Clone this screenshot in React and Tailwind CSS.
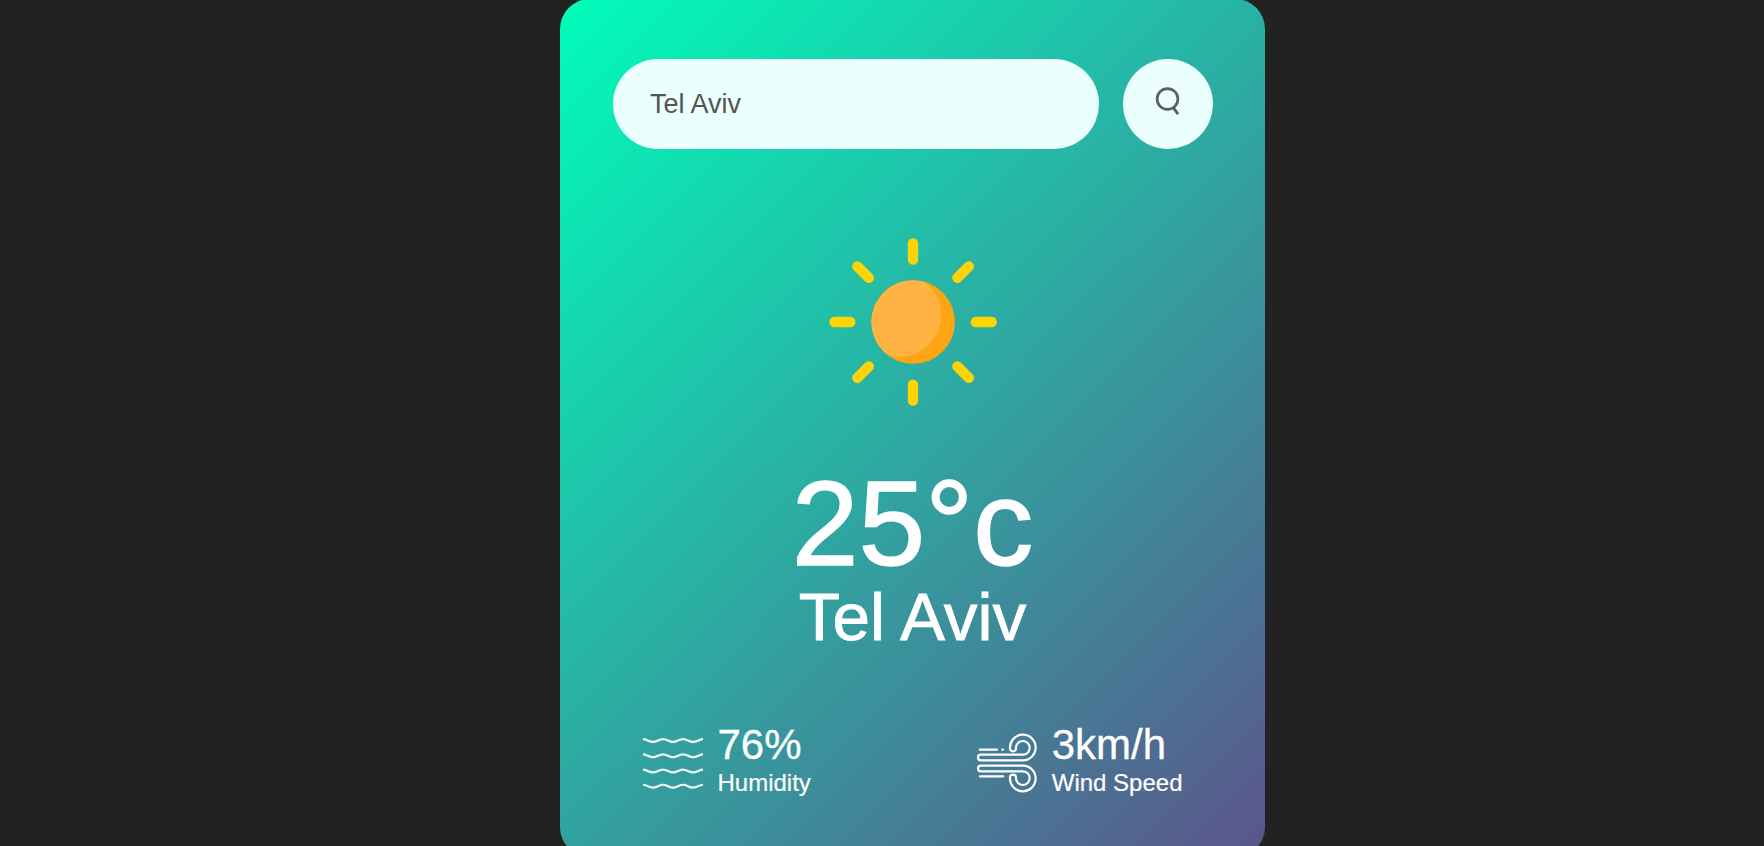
import React from "react";

function SearchIcon() {
  return (
    <svg className="h-[30px] w-[30px]" viewBox="0 0 30 30" fill="none" stroke="#5f5f5f">
      <circle cx="14.5" cy="14" r="10.4" strokeWidth="2.7" />
      <path d="M20.2 22.3 L25 29.2" strokeWidth="2.9" />
    </svg>
  );
}

function SunIcon() {
  return (
    <svg className="mt-[45px] h-[255px] w-[255px]" viewBox="-75 -78 765 765">
      <defs>
        <clipPath id="disc">
          <circle cx="309.5" cy="306" r="125.5" />
        </clipPath>
      </defs>
      <circle cx="309.5" cy="306" r="125.5" fill="#ffa412" />
      <circle cx="268" cy="285" r="126" fill="#ffb342" clipPath="url(#disc)" />
      <path
        d="M309 70V119M309 494V542M73.500 306H121M497.500 306H545.500M142 139L176.500 173.500M476.500 139L442 173.500M142 473.500L176.500 439M476.500 473.500L442 439"
        stroke="#ffd405"
        strokeWidth="31"
        strokeLinecap="round"
      />
    </svg>
  );
}

const wave = "c3.500 0 6 2.800 10 2.800s6-2.800 10-2.800s6 2.800 10 2.800s6-2.800 10-2.800s6 2.800 10 2.800s6.500-2.800 10-2.800";

function HumidityIcon() {
  return (
    <svg className="mt-[9px] h-[60px] w-[60px]" viewBox="0 0 60 60" fill="none" stroke="#fff" strokeWidth="2.1" strokeOpacity="0.95">
      {[6.1, 21.4, 36.6, 51.8].map((y) => (
        <path key={y} d={`M0 ${y}${wave}`} />
      ))}
    </svg>
  );
}

const gust =
  "M120 71A38.500 38.500 0 1 1 158.500 107H32.500A8.500 8.500 0 0 1 32.500 90H158.500A20.500 20.500 0 1 0 138 69.500V71A9 9 0 0 1 120 71Z";

function WindIcon() {
  return (
    <svg className="mt-[9px] h-[60px] w-[60px]" viewBox="21 25 180 180" fill="none" stroke="#fff" strokeWidth="6.5" strokeLinecap="round">
      <path d={gust} />
      <path d={gust} transform="translate(0 230) scale(1 -1)" />
      <path d="M29.500 75H81M97 75H99M29.500 155H100" />
    </svg>
  );
}

function Detail({ icon, value, label }) {
  return (
    <div className="flex items-start">
      {icon}
      <div className="ml-[15px]">
        <p className="text-[42px] leading-[42px] [-webkit-text-stroke:0.3px_white]">{value}</p>
        <p className="mt-[5px] text-[24px] leading-[24px] [-webkit-text-stroke:0.2px_white]">{label}</p>
      </div>
    </div>
  );
}

export default function App() {
  return (
    <div className="h-[846px] overflow-hidden bg-[#222222] pl-[560px] font-['Liberation_Sans',Arial,sans-serif]">
      <main className="-mt-px flex h-[858px] w-[705px] flex-col rounded-[30px] bg-[linear-gradient(135deg,#00feba,#5b548a)] px-[52.5px] pt-[60px] text-white">
        <div className="flex items-center justify-between">
          <input
            type="text"
            defaultValue="Tel Aviv"
            className="h-[90px] w-[486px] rounded-[45px] bg-[#ebfffc] px-[37.5px] text-[27px] text-[#555555] outline-none"
          />
          <button className="flex h-[90px] w-[90px] items-start justify-center rounded-full bg-[#ebfffc] pt-[26px]">
            <SearchIcon />
          </button>
        </div>

        <section className="flex flex-col items-center">
          <SunIcon />
          <h1 className="mt-[14px] text-[120px] leading-[120px] font-normal [-webkit-text-stroke:1.5px_white]">25°c</h1>
          <h2 className="text-[67.5px] leading-[68px] font-normal [-webkit-text-stroke:0.8px_white]">Tel Aviv</h2>
        </section>

        <div className="mt-[73px] flex justify-between px-[30px]">
          <Detail icon={<HumidityIcon />} value="76%" label="Humidity" />
          <Detail icon={<WindIcon />} value="3km/h" label="Wind Speed" />
        </div>
      </main>
    </div>
  );
}
